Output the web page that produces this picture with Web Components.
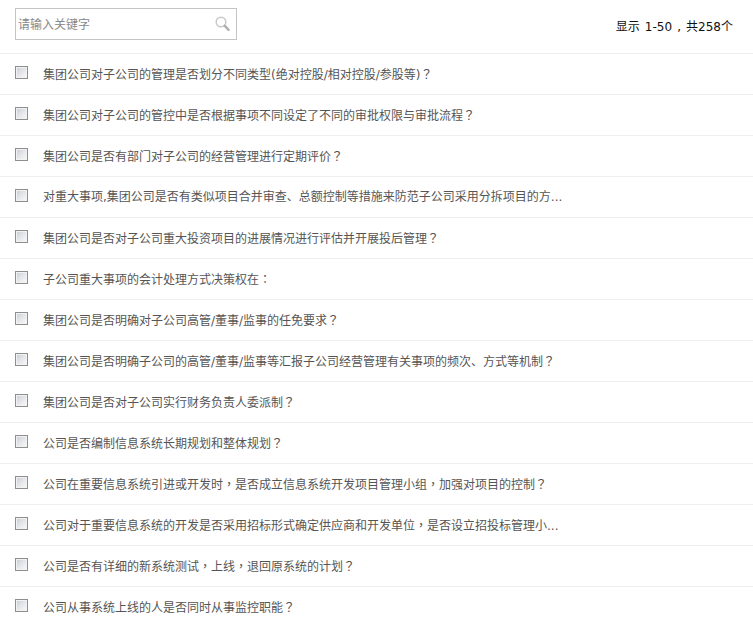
<!DOCTYPE html>
<html lang="zh-Hans">
<head>
<meta charset="utf-8">
<title>题库</title>
<style>
  html, body { margin: 0; padding: 0; background: #fff; overflow: hidden; height: 622px; }
  body { font-family: "DejaVu Sans", "Noto Sans CJK SC", sans-serif; font-size: 12px; }
  /* full-width punctuation sits centred in its cell in the reference */
  b { font-weight: normal; font-family: "Noto Sans CJK TC", sans-serif; }
</style>
</head>
<body>
<list-page total="1-50 , 共258个">
  <question-row>集团公司对子公司的管理是否划分不同类型(绝对控股/相对控股/参股等)<b>？</b></question-row>
  <question-row>集团公司对子公司的管控中是否根据事项不同设定了不同的审批权限与审批流程<b>？</b></question-row>
  <question-row>集团公司是否有部门对子公司的经营管理进行定期评价<b>？</b></question-row>
  <question-row>对重大事项,集团公司是否有类似项目合并审查、总额控制等措施来防范子公司采用分拆项目的方...</question-row>
  <question-row>集团公司是否对子公司重大投资项目的进展情况进行评估并开展投后管理<b>？</b></question-row>
  <question-row>子公司重大事项的会计处理方式决策权在<b>：</b></question-row>
  <question-row>集团公司是否明确对子公司高管/董事/监事的任免要求<b>？</b></question-row>
  <question-row>集团公司是否明确子公司的高管/董事/监事等汇报子公司经营管理有关事项的频次、方式等机制<b>？</b></question-row>
  <question-row>集团公司是否对子公司实行财务负责人委派制<b>？</b></question-row>
  <question-row>公司是否编制信息系统长期规划和整体规划<b>？</b></question-row>
  <question-row>公司在重要信息系统引进或开发时<b>，</b>是否成立信息系统开发项目管理小组<b>，</b>加强对项目的控制<b>？</b></question-row>
  <question-row>公司对于重要信息系统的开发是否采用招标形式确定供应商和开发单位<b>，</b>是否设立招投标管理小...</question-row>
  <question-row>公司是否有详细的新系统测试<b>，</b>上线<b>，</b>退回原系统的计划<b>？</b></question-row>
  <question-row>公司从事系统上线的人是否同时从事监控职能<b>？</b></question-row>
</list-page>
<script>
for (const mark of document.querySelectorAll("b")) mark.lang = "zh-Hant";

class SearchBox extends HTMLElement {
  constructor() {
    super();
    this.attachShadow({ mode: "open" }).innerHTML = `<style>
      :host { display: flex; align-items: center; box-sizing: border-box; width: 222px; height: 32px; border: 1px solid #c4c4c4; padding: 0 5px 0 2px; }
      span { flex: 1; color: #888; font-size: 12px; line-height: 30px; padding-top: 1px; }
      svg { display: block; }
    </style>
    <span>请输入关键字</span>
    <svg width="16" height="16" viewBox="0 0 16 16" fill="none">
      <circle cx="6" cy="6" r="4.8" stroke="#c8c8c8" stroke-width="1.5"/>
      <path d="M9.8 9.8 L13.6 13.8" stroke="#b0b0b0" stroke-width="2.4" stroke-linecap="round"/>
    </svg>`;
  }
}
customElements.define("search-box", SearchBox);

class QuestionRow extends HTMLElement {
  constructor() {
    super();
    this.attachShadow({ mode: "open" }).innerHTML = `<style>
      :host { display: flex; box-sizing: border-box; height: 41px; border-top: 1px solid #eee; padding: 12px 0 0 15px; }
      i { display: block; box-sizing: border-box; width: 13px; height: 13px; flex: none; border: 1px solid #8e8e8e;
          background: linear-gradient(135deg, #c6ccd6 0%, #e4e6ea 50%, #fafafa 100%); box-shadow: inset 0 0 0 1px #f2f2f2; }
      p { margin: 0 0 0 15px; color: #555; font-size: 12px; line-height: 16px; white-space: nowrap; }
    </style><i></i><p><slot></slot></p>`;
  }
}
customElements.define("question-row", QuestionRow);

class ListPage extends HTMLElement {
  constructor() {
    super();
    this.attachShadow({ mode: "open" }).innerHTML = `<style>
      :host { display: block; width: 753px; }
      header { display: flex; justify-content: space-between; align-items: center; box-sizing: border-box; height: 53px; padding: 0 20px 0 15px; }
      header search-box { margin-top: -5px; }
      .count { color: #111; font-size: 12px; margin-top: -3px; word-spacing: 1.3px; }
    </style>
    <header><search-box></search-box><span class="count">显示 <span id="t"></span></span></header>
    <slot></slot>`;
    this.shadowRoot.getElementById("t").textContent = this.getAttribute("total");
  }
}
customElements.define("list-page", ListPage);
</script>
</body>
</html>
